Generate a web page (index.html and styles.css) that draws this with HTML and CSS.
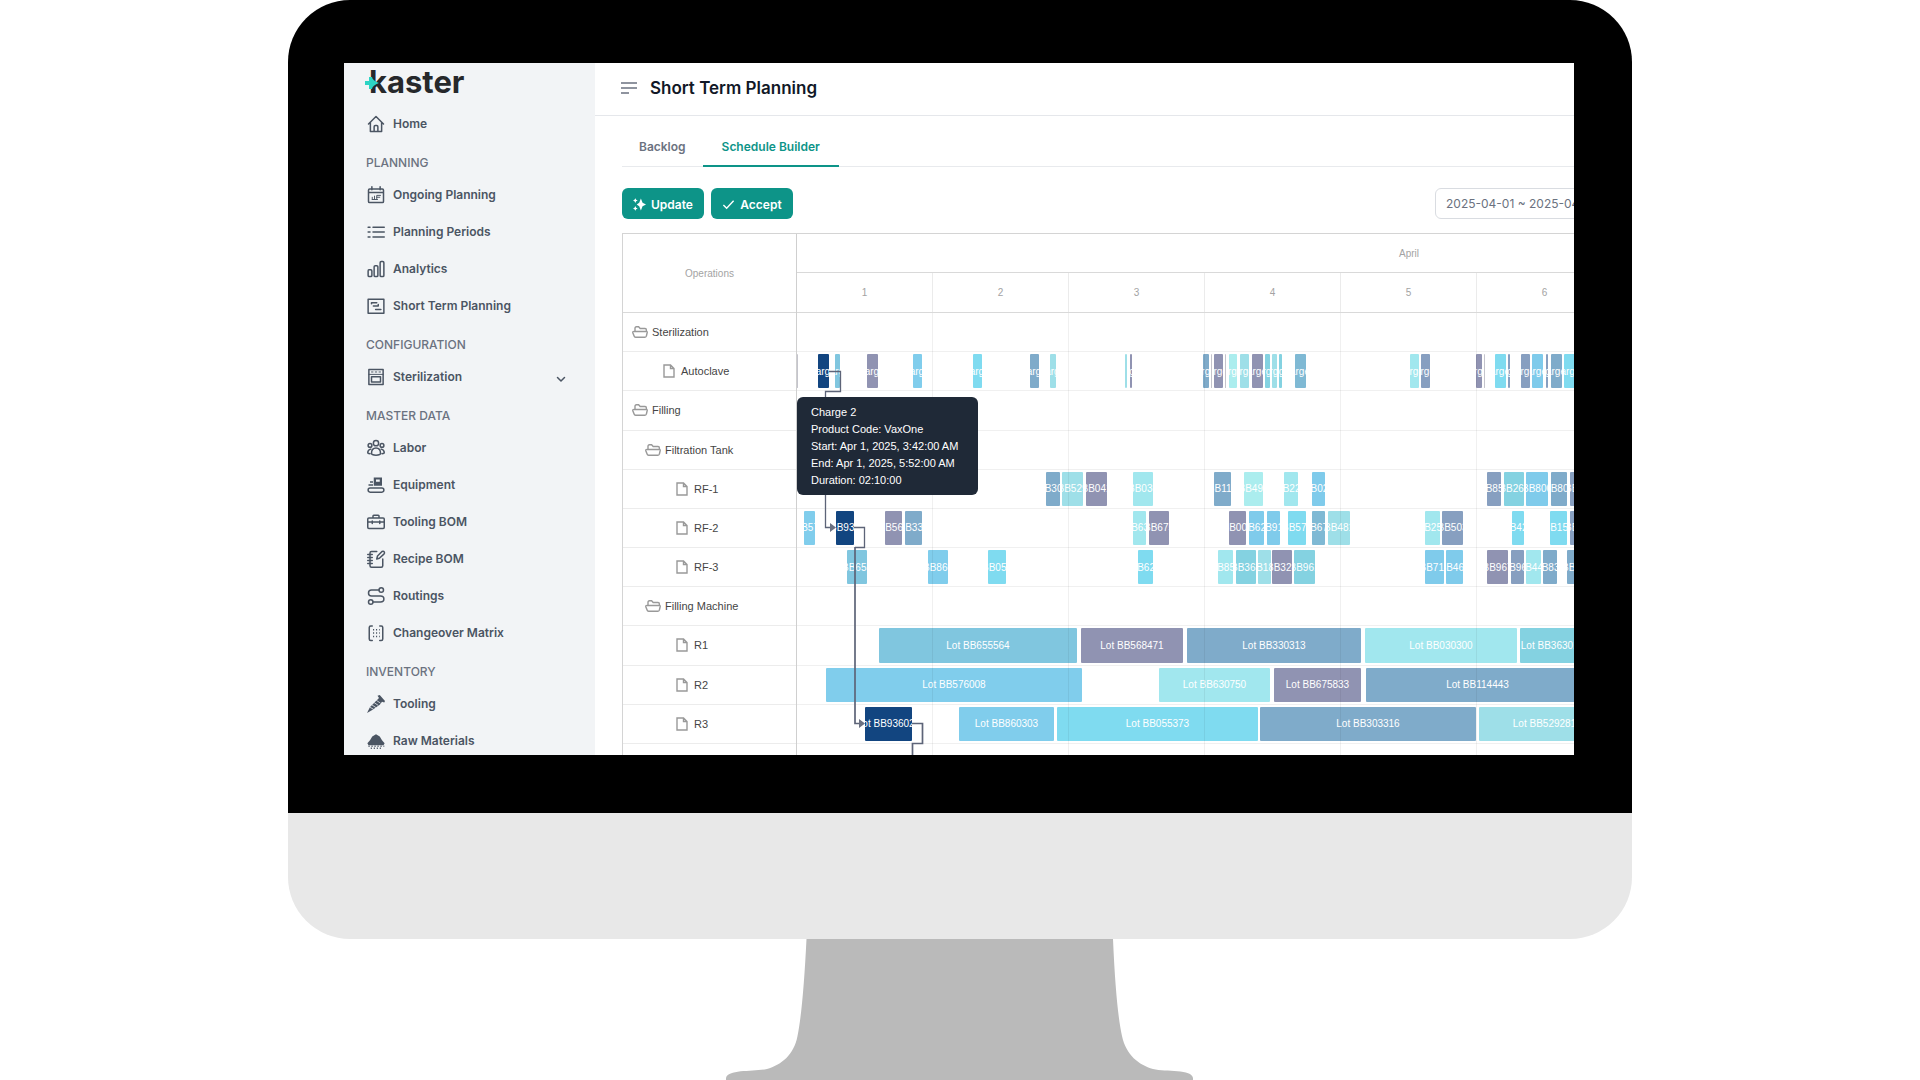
FILE: index.html
```html
<!DOCTYPE html>
<html lang="en">
<head>
<meta charset="utf-8">
<title>Kaster – Short Term Planning</title>
<link rel="stylesheet" href="styles.css">
</head>
<body>
<svg class="defs" aria-hidden="true">
  <symbol id="folder" viewBox="0 0 16 12"><path d="M3 5.500V2.200Q3 .8 4.400 .8H6.600L8.200 2.500H13Q14.400 2.500 14.400 3.900V5.500M2 5.500H14.600Q15.400 5.500 15.200 6.500L14.400 10Q14.200 11.200 13 11.200H3.600Q2.400 11.200 2.100 10L.8 6.700Q.5 5.500 2 5.500Z"/></symbol>
  <symbol id="file" viewBox="0 0 12 14"><path d="M1 1H7.500L11 4.500V13H1ZM7.500 1V4.500H11"/></symbol>
</svg>
<div class="monitor">
  <div class="bezel">
    <div class="screen">
      <aside class="sidebar">
        <div class="logo">
          <svg class="logo-mark" viewBox="0 0 14 14" aria-hidden="true"><path d="M0 5H4V1H7Q7.500 4.500 14 7Q7.500 9.500 7 13H4V9H0Z"/></svg>
          <span>kaster</span>
        </div>
        <nav>
          <a class="item" href="#"><svg viewBox="0 0 24 24"><path d="M2 12 12 2 22 12M4.500 10V22H19.500V10M9.500 22V15.500Q9.500 14 11 14H13Q14.500 14 14.500 15.500V22"/></svg>Home</a>
          <h2>PLANNING</h2>
          <a class="item" href="#"><svg viewBox="0 0 24 24"><path d="M3.500 4H20.500Q22 4 22 5.500V20.500Q22 22 20.500 22H3.500Q2 22 2 20.500V5.500Q2 4 3.500 4ZM2 8.500H22M6.500 1V5M17.500 1V5"/><path class="thin" d="M7 18V15M10 18V13.500M13 18V12.500H18M13 15H17M7 18H14"/></svg>Ongoing Planning</a>
          <a class="item" href="#"><svg viewBox="0 0 24 24"><path d="M8 5.500H23M8 12H23M8 18.500H23M1.500 5.500H4M1.500 12H4M1.500 18.500H4"/></svg>Planning Periods</a>
          <a class="item" href="#"><svg viewBox="0 0 24 24"><path d="M2.500 13H5Q6.500 13 6.500 14.500V20.500Q6.500 22 5 22H3Q1.500 22 1.500 20.500V14.500Q1.500 13 2.500 13ZM11 7.500H13Q14.500 7.500 14.500 9V20.500Q14.500 22 13 22H11Q9.500 22 9.500 20.500V9Q9.500 7.500 11 7.500ZM19 2H21Q22.500 2 22.500 3.500V20.500Q22.500 22 21 22H19Q17.500 22 17.500 20.500V3.500Q17.500 2 19 2Z"/></svg>Analytics</a>
          <a class="item" href="#"><svg viewBox="0 0 24 24"><path d="M1.500 3H22.500V21.500H1.500ZM6 7.500H13M8.500 12H15M11.500 16.500H18.500M6 9V7.500M15 12V10"/></svg>Short Term Planning</a>
          <h2>CONFIGURATION</h2>
          <a class="item" href="#"><svg viewBox="0 0 24 24"><path d="M2.500 2H21.500V22H2.500ZM6 11.500H18V18.500H6Z"/><path class="thin" d="M2.500 8.500H21.500M6 5.300H8M11 5.300H13M16 5.300H18"/></svg>Sterilization<svg class="chevron" viewBox="0 0 10 10"><path d="M1.500 3.500 5 7 8.500 3.500"/></svg></a>
          <h2>MASTER DATA</h2>
          <a class="item" href="#"><svg viewBox="0 0 24 24"><circle cx="12" cy="5.500" r="3.500"/><circle cx="4" cy="8.500" r="2.500"/><circle cx="20" cy="8.500" r="2.500"/><path d="M6 19Q6 12 12 12T18 19Q18 21.500 12 21.500T6 19ZM5 13.500Q1 14.500 1 18Q1 19.500 4 19.500M19 13.500Q23 14.500 23 18Q23 19.500 20 19.500"/></svg>Labor</a>
          <a class="item" href="#"><svg viewBox="0 0 24 24"><path class="solid" fill-rule="evenodd" d="M9 2H20V13H9ZM12 4.500V7.500H17V4.500ZM2 11H8V13H2ZM4 7H8V9H4Z"/><rect x="1.500" y="16" width="21" height="5.500" rx="2.700"/></svg>Equipment</a>
          <a class="item" href="#"><svg viewBox="0 0 24 24"><path d="M2.500 6.500H21.500Q23 6.500 23 8V19Q23 20.500 21.500 20.500H2.500Q1 20.500 1 19V8Q1 6.500 2.500 6.500ZM8 6V4Q8 3 9 3H15Q16 3 16 4V6M1 12H23M7 10.500V14M17 10.500V14"/></svg>Tooling BOM</a>
          <a class="item" href="#"><svg viewBox="0 0 24 24"><path d="M13 2H6Q4 2 4 4V21Q4 23 6 23H19Q21 23 21 21V12M1 6H7M1 10H7M1 14H7M1 18H7M13 12 14 8 20 2Q22 1 23 2.500T22.500 5.500L16.500 11Z"/></svg>Recipe BOM</a>
          <a class="item" href="#"><svg viewBox="0 0 24 24"><circle cx="19" cy="4" r="3"/><circle cx="5" cy="20" r="3"/><path d="M16 4H6Q2 4 2 8T6 12H18Q22.500 12 22.500 16T18 20H8"/></svg>Routings</a>
          <a class="item" href="#"><svg viewBox="0 0 24 24"><path d="M7 2.500H5Q3 2.500 3 4.500V20Q3 22 5 22H7M17 2.500H19Q21 2.500 21 4.500V20Q21 22 19 22H17"/><path class="dots" d="M8 7.500H17M8 12H17M8 16.500H17"/></svg>Changeover Matrix</a>
          <h2>INVENTORY</h2>
          <a class="item" href="#"><svg viewBox="0 0 24 24"><path class="solid" d="M14 1 17 0 24 8 23 10 20 9 17 13 7 20 0 24 4 16 12 8 16 4Z"/><path class="cut" d="M4 16.500 8 18.500M7 13.500 11.500 16.500M10 10.500 14.500 13.500M13 7.500 17.500 10.500"/></svg>Tooling</a>
          <a class="item" href="#"><svg viewBox="0 0 24 24"><path class="solid" d="M12 3 17 6 20 11 23.500 15 22 17.500H2L.5 15 4 11 7 6Z"/><path class="dots" d="M2 19H23M5 21.500H20"/></svg>Raw Materials</a>
        </nav>
      </aside>

      <main class="workspace">
        <header class="topbar">
          <button class="menu" type="button" aria-label="Toggle menu"><svg viewBox="0 0 16 14"><path d="M0 2H16M0 7H16M0 12H8"/></svg></button>
          <h1>Short Term Planning</h1>
        </header>
        <div class="content">
          <div class="tabs" role="tablist">
            <button class="tab" type="button" role="tab">Backlog</button>
            <button class="tab active" type="button" role="tab" aria-selected="true">Schedule Builder</button>
          </div>
          <div class="toolbar">
            <button class="btn" type="button"><svg viewBox="0 0 14 14"><path d="M8.500 .5 10.300 5.200 14 7 10.300 8.800 8.500 13.500 6.700 8.800 4 7 6.700 5.200ZM2.500 .2 3.400 1.900 5 2.700 3.400 3.600 2.500 5.300 1.600 3.600 0 2.700 1.600 1.900ZM2.500 8.700 3.400 10.400 5 11.200 3.400 12.100 2.500 13.800 1.600 12.100 0 11.200 1.600 10.400Z"/></svg>Update</button>
            <button class="btn" type="button"><svg class="check" viewBox="0 0 14 14"><path d="M1.500 7.500 5 11 12.500 3"/></svg>Accept</button>
            <input class="range" type="text" aria-label="Date range" value="2025-04-01 ~ 2025-04-30">
          </div>

          <section class="gantt">
            <div class="tree">
              <div class="tree-head">Operations</div>
              <div class="rows">
                <div class="node"><svg class="folder"><use href="#folder"/></svg>Sterilization</div>
                <div class="node leaf-a"><svg class="file"><use href="#file"/></svg>Autoclave</div>
                <div class="node"><svg class="folder"><use href="#folder"/></svg>Filling</div>
                <div class="node sub"><svg class="folder"><use href="#folder"/></svg>Filtration Tank</div>
                <div class="node leaf"><svg class="file"><use href="#file"/></svg>RF-1</div>
                <div class="node leaf"><svg class="file"><use href="#file"/></svg>RF-2</div>
                <div class="node leaf"><svg class="file"><use href="#file"/></svg>RF-3</div>
                <div class="node sub"><svg class="folder"><use href="#folder"/></svg>Filling Machine</div>
                <div class="node leaf"><svg class="file"><use href="#file"/></svg>R1</div>
                <div class="node leaf"><svg class="file"><use href="#file"/></svg>R2</div>
                <div class="node leaf"><svg class="file"><use href="#file"/></svg>R3</div>
                <div class="node"></div>
              </div>
            </div>
            <div class="timeline">
              <div class="month">April</div>
              <div class="days"><span>1</span><span>2</span><span>3</span><span>4</span><span>5</span><span>6</span><span>7</span><span>8</span><span>9</span></div>
              <div class="rows chart">
                <div class="lane"></div>
                <div class="lane">
                  <span class="bar sliver" style="left:0px;width:1px"></span>
                  <span class="bar navy" style="left:21px;width:11px">Charge 2</span>
                  <span class="bar lake" style="left:38px;width:5px">Charge 3</span>
                  <span class="bar plum" style="left:70px;width:11px">Charge 4</span>
                  <span class="bar sky" style="left:116px;width:9px">Charge 5</span>
                  <span class="bar cyan" style="left:176px;width:9px">Charge 6</span>
                  <span class="bar steel" style="left:233px;width:9px">Charge 7</span>
                  <span class="bar ice" style="left:253px;width:6px">Charge 8</span>
                  <span class="bar ice" style="left:328px;width:2px"></span>
                  <span class="bar plum" style="left:333px;width:2px">Charge 10</span>
                  <span class="bar steel" style="left:406px;width:6px">Charge 11</span>
                  <span class="bar sliver" style="left:414px;width:1px"></span>
                  <span class="bar plum" style="left:417px;width:9px">Charge 13</span>
                  <span class="bar sliver" style="left:428px;width:1px"></span>
                  <span class="bar mint" style="left:432px;width:8px">Charge 15</span>
                  <span class="bar ice" style="left:443px;width:9px">Charge 16</span>
                  <span class="bar plum" style="left:455px;width:11px">Charge 17</span>
                  <span class="bar aqua" style="left:468px;width:5px">Charge 18</span>
                  <span class="bar ice" style="left:475px;width:5px">Charge 19</span>
                  <span class="bar aqua" style="left:482px;width:3px">Charge 20</span>
                  <span class="bar teal" style="left:498px;width:11px">Charge 21</span>
                  <span class="bar foam" style="left:613px;width:9px">Charge 22</span>
                  <span class="bar slate" style="left:624px;width:9px">Charge 23</span>
                  <span class="bar plum" style="left:679px;width:6px">Charge 24</span>
                  <span class="bar sliver" style="left:687px;width:1px"></span>
                  <span class="bar cyan" style="left:698px;width:11px">Charge 26</span>
                  <span class="bar slate" style="left:711px;width:2px">Charge 27</span>
                  <span class="bar slate" style="left:724px;width:9px">Charge 28</span>
                  <span class="bar azure" style="left:735px;width:11px">Charge 29</span>
                  <span class="bar slate" style="left:749px;width:2px">Charge 30</span>
                  <span class="bar steel" style="left:754px;width:11px">Charge 31</span>
                  <span class="bar cyan" style="left:767px;width:14px">Charge 32</span>
                </div>
                <div class="lane"></div>
                <div class="lane"></div>
                <div class="lane">
                  <span class="bar steel" style="left:249px;width:14px">Lot BB303316</span>
                  <span class="bar ice" style="left:265px;width:21px">Lot BB529281</span>
                  <span class="bar plum" style="left:289px;width:21px">Lot BB041972</span>
                  <span class="bar foam" style="left:336px;width:20px">Lot BB030300</span>
                  <span class="bar steel" style="left:417px;width:17px">Lot BB114443</span>
                  <span class="bar mint" style="left:447px;width:19px">Lot BB490215</span>
                  <span class="bar foam" style="left:487px;width:14px">Lot BB227410</span>
                  <span class="bar azure" style="left:515px;width:13px">Lot BB021186</span>
                  <span class="bar slate" style="left:690px;width:14px">Lot BB850934</span>
                  <span class="bar aqua" style="left:707px;width:20px">Lot BB261145</span>
                  <span class="bar azure" style="left:729px;width:22px">Lot BB800672</span>
                  <span class="bar steel" style="left:754px;width:16px">Lot BB802519</span>
                  <span class="bar slate" style="left:773px;width:20px">Lot BB731052</span>
                </div>
                <div class="lane">
                  <span class="bar sky" style="left:7px;width:11px">Lot BB576008</span>
                  <span class="bar navy" style="left:39px;width:18px">Lot BB936021</span>
                  <span class="bar plum" style="left:88px;width:17px">Lot BB568471</span>
                  <span class="bar steel" style="left:108px;width:17px">Lot BB330313</span>
                  <span class="bar foam" style="left:336px;width:13px">Lot BB630750</span>
                  <span class="bar plum" style="left:352px;width:20px">Lot BB675833</span>
                  <span class="bar plum" style="left:432px;width:17px">Lot BB004127</span>
                  <span class="bar azure" style="left:452px;width:15px">Lot BB620841</span>
                  <span class="bar azure" style="left:470px;width:13px">Lot BB915503</span>
                  <span class="bar cyan" style="left:491px;width:18px">Lot BB574320</span>
                  <span class="bar teal" style="left:515px;width:13px">Lot BB672218</span>
                  <span class="bar ice" style="left:531px;width:22px">Lot BB481760</span>
                  <span class="bar foam" style="left:628px;width:15px">Lot BB255091</span>
                  <span class="bar slate" style="left:645px;width:21px">Lot BB503384</span>
                  <span class="bar cyan" style="left:715px;width:12px">Lot BB424406</span>
                  <span class="bar cyan" style="left:753px;width:17px">Lot BB152673</span>
                  <span class="bar slate" style="left:773px;width:20px">Lot BB648210</span>
                </div>
                <div class="lane">
                  <span class="bar lake" style="left:50px;width:20px">Lot BB655564</span>
                  <span class="bar sky" style="left:131px;width:20px">Lot BB860303</span>
                  <span class="bar cyan" style="left:191px;width:18px">Lot BB055373</span>
                  <span class="bar cyan" style="left:341px;width:15px">Lot BB620841</span>
                  <span class="bar foam" style="left:421px;width:15px">Lot BB850934</span>
                  <span class="bar aqua" style="left:439px;width:20px">Lot BB363018</span>
                  <span class="bar ice" style="left:461px;width:13px">Lot BB181925</span>
                  <span class="bar plum" style="left:475px;width:20px">Lot BB328846</span>
                  <span class="bar aqua" style="left:497px;width:21px">Lot BB961307</span>
                  <span class="bar azure" style="left:628px;width:19px">Lot BB714259</span>
                  <span class="bar azure" style="left:649px;width:17px">Lot BB460538</span>
                  <span class="bar plum" style="left:690px;width:21px">Lot BB967124</span>
                  <span class="bar slate" style="left:714px;width:13px">Lot BB960482</span>
                  <span class="bar foam" style="left:729px;width:15px">Lot BB444391</span>
                  <span class="bar steel" style="left:746px;width:14px">Lot BB832760</span>
                  <span class="bar steel" style="left:770px;width:20px">Lot BB517743</span>
                </div>
                <div class="lane"></div>
                <div class="lane">
                  <span class="bar lake" style="left:82px;width:198px">Lot BB655564</span>
                  <span class="bar plum" style="left:284px;width:102px">Lot BB568471</span>
                  <span class="bar steel" style="left:390px;width:174px">Lot BB330313</span>
                  <span class="bar foam" style="left:568px;width:152px">Lot BB030300</span>
                  <span class="bar aqua" style="left:723px;width:65px">Lot BB363018</span>
                </div>
                <div class="lane">
                  <span class="bar sky" style="left:29px;width:256px">Lot BB576008</span>
                  <span class="bar foam" style="left:362px;width:111px">Lot BB630750</span>
                  <span class="bar plum" style="left:477px;width:87px">Lot BB675833</span>
                  <span class="bar steel" style="left:569px;width:223px">Lot BB114443</span>
                </div>
                <div class="lane">
                  <span class="bar navy" style="left:68px;width:47px">Lot BB936021</span>
                  <span class="bar sky" style="left:162px;width:95px">Lot BB860303</span>
                  <span class="bar cyan" style="left:260px;width:201px">Lot BB055373</span>
                  <span class="bar steel" style="left:463px;width:216px">Lot BB303316</span>
                  <span class="bar ice" style="left:682px;width:131px">Lot BB529281</span>
                </div>
                <div class="lane"></div>
                <svg class="links" viewBox="0 0 200 470" width="200" height="470" aria-hidden="true">
                  <path class="light" d="M32 58.500H43.500V78.500H28.500V214.500H34"/>
                  <path class="light" d="M57 214.500H67.500V234.500H58"/>
                  <path d="M58 234V410.500H64M115 410.500H125.500V430.500H115.500V470"/>
                  <path class="tip" d="M33 210 39 214.500 33 219ZM62 406 68 410.500 62 415Z"/>
                </svg>
                <div class="tooltip" role="tooltip">Charge 2<br>Product Code: VaxOne<br>Start: Apr 1, 2025, 3:42:00 AM<br>End: Apr 1, 2025, 5:52:00 AM<br>Duration: 02:10:00</div>
              </div>
            </div>
          </section>
        </div>
      </main>
    </div>
  </div>
  <div class="chin"></div>
  <svg class="stand" viewBox="0 0 468 141" aria-hidden="true"><path d="M80.500 0H387Q390 70 396 97C400 116 413 126 427 130C440 133 466 130 467 139V141H0V139C2 130 28 133 41 130C55 126 68 116 71.500 97Q77 70 80.500 0Z"/></svg>
</div>
</body>
</html>
```
FILE: styles.css
```css
* { box-sizing: border-box; }
body { margin: 0; background: #fff; font-family: Inter, "Liberation Sans", sans-serif; font-size: 12px; color: #4b5563; }
button, input { font: inherit; margin: 0; }
.defs { display: none; }

/* Monitor */
.monitor { width: 70%; margin: 0 auto; display: flex; flex-direction: column; align-items: center; }
.bezel { width: 100%; padding: 63px 58px 58px 56px; background: #000; border-radius: 62px 62px 0 0; }
.screen { display: flex; aspect-ratio: 1230 / 692; overflow: hidden; background: #fff; }
.chin { width: 100%; height: 126px; background: #e8e8e8; border-radius: 0 0 62px 62px; }
.stand { display: block; width: 468px; height: 141px; fill: #bababa; }

/* Sidebar */
.sidebar { flex: 0 0 251px; height: 0; min-height: 100%; padding: 0 22px; background: #f2f4f6; overflow: hidden; }
.logo { position: relative; height: 42px; padding-left: 3px; color: #26282b; font-size: 31px; font-weight: 700; line-height: 37px; }
.logo-mark { position: absolute; left: -1px; top: 13px; width: 14px; height: 14px; fill: #2dd4c4; }
nav h2 { height: 34px; margin: 0; padding-top: 6px; font-size: 12px; font-weight: 500; line-height: 30px; color: #6b7280; }
.item { display: flex; align-items: center; gap: 8px; height: 37px; padding-left: 1px; color: #4b5563; font-weight: 600; text-decoration: none; }
.item svg { width: 18px; height: 18px; overflow: visible; fill: none; stroke: #4b5563; stroke-width: 2; stroke-linejoin: round; stroke-linecap: round; }
.item .chevron { width: 10px; height: 10px; margin: 4px 7px 0 auto; stroke-width: 1.5; }
.item .thin { stroke-width: 1.3; }
.item .solid { fill: #4b5563; stroke: none; }
.item .cut { stroke: #f2f4f6; stroke-width: 1; }
.item .dots { stroke-dasharray: 1.5 2.5; stroke-linecap: butt; }

/* Workspace runs past the right edge of the screen */
.workspace { flex: 0 0 1040px; min-width: 0; }
.topbar { display: flex; align-items: center; gap: 13px; height: 53px; padding: 0 0 3px 26px; border-bottom: 1px solid #e5e7eb; }
.menu { display: flex; padding: 0; border: 0; background: none; }
.menu svg { width: 16px; height: 14px; stroke: #6b7280; stroke-width: 1.7; }
h1 { margin: 0; font-size: 17px; font-weight: 600; color: #111827; }
.content { padding: 10px 0 0 27px; }
.tabs { display: flex; height: 41px; border-bottom: 1px solid #e8eaed; }
.tab { height: 41px; padding: 1px 17px 0; border: 0; border-bottom: 2px solid transparent; background: none; font-weight: 600; color: #6b7280; }
.tab.active { padding: 1px 19px 0; color: #0d9488; border-color: #0d9488; }
.toolbar { display: flex; gap: 7px; margin-top: 21px; }
.btn { display: flex; align-items: center; justify-content: center; gap: 5px; width: 82px; height: 31px; padding: 1px 0 0; border: 0; border-radius: 6px; background: #0d9488; color: #fff; font-weight: 600; }
.btn svg { width: 13px; height: 13px; fill: #fff; }
.btn .check { fill: none; stroke: #fff; stroke-width: 1.5; }
.range { width: 200px; height: 31px; margin-left: auto; padding: 0 10px; border: 1px solid #d9dce1; border-radius: 6px; background: #fff; color: #6b7280; outline: 0; }

/* Gantt */
.gantt { display: flex; margin-top: 14px; border: 1px solid #d4d4d4; border-right: 0; font-family: "Liberation Sans", Arial, sans-serif; font-size: 10px; color: #a3a3a3; overflow: hidden; }
.tree { flex: 0 0 174px; border-right: 1px solid #cfcfcf; }
.tree-head { display: flex; align-items: center; justify-content: center; height: 79px; border-bottom: 1px solid #d9d9d9; }
.rows { display: grid; grid-template-rows: repeat(12, 1fr); height: 470px; }
.node { display: flex; align-items: center; gap: 4px; padding-left: 9px; border-bottom: 1px solid #ececec; font-size: 11px; color: #454545; }
.node.sub { padding-left: 22px; }
.node.leaf-a { padding-left: 40px; gap: 6px; }
.node.leaf { padding-left: 53px; gap: 6px; }
.node svg { fill: none; stroke: #999; stroke-width: 1.4; }
.folder { width: 16px; height: 12px; }
.file { width: 12px; height: 14px; }
.timeline { flex: 0 0 1224px; }
.month { display: flex; align-items: center; justify-content: center; height: 39px; border-bottom: 1px solid #d9d9d9; }
.days { display: grid; grid-template-columns: repeat(9, 136px); height: 40px; border-bottom: 1px solid #d9d9d9; }
.days span { display: flex; align-items: center; justify-content: center; border-right: 1px solid #ebebeb; }
.chart { position: relative; }
.chart::after { content: ""; position: absolute; inset: 0; background: repeating-linear-gradient(to right, transparent 0 135px, rgba(0, 0, 0, 0.06) 135px 136px); pointer-events: none; }
.lane { position: relative; border-bottom: 1px solid #f0f0f0; }
.bar { position: absolute; top: 2px; bottom: 2px; display: flex; align-items: center; justify-content: center; overflow: hidden; border-radius: 1px; color: #fff; white-space: nowrap; }
.navy { background: #124580; }
.lake { background: #80c6df; }
.plum { background: #9093b2; }
.sky { background: #80cdec; }
.azure { background: #7fcbeb; }
.cyan { background: #7fdbf0; }
.steel { background: #7fabca; }
.slate { background: #879fc0; }
.teal { background: #7fb9d4; }
.aqua { background: #84d2e1; }
.ice { background: #9edfe8; }
.foam { background: #a1e7ee; }
.mint { background: #abedee; }
.sliver { background: #c4c4cc; }
.links { position: absolute; left: 0; top: 0; fill: none; stroke: #5d6478; stroke-width: 1.7; }
.links .light { stroke-width: 1.3; }
.links .tip { fill: #6b7182; stroke: none; }
.tooltip { position: absolute; z-index: 1; left: 0; top: 84px; width: 181px; padding: 7px 14px 6px; border-radius: 6px; background: #1f2937; color: #fff; font-size: 11px; line-height: 17px; white-space: nowrap; }
```
